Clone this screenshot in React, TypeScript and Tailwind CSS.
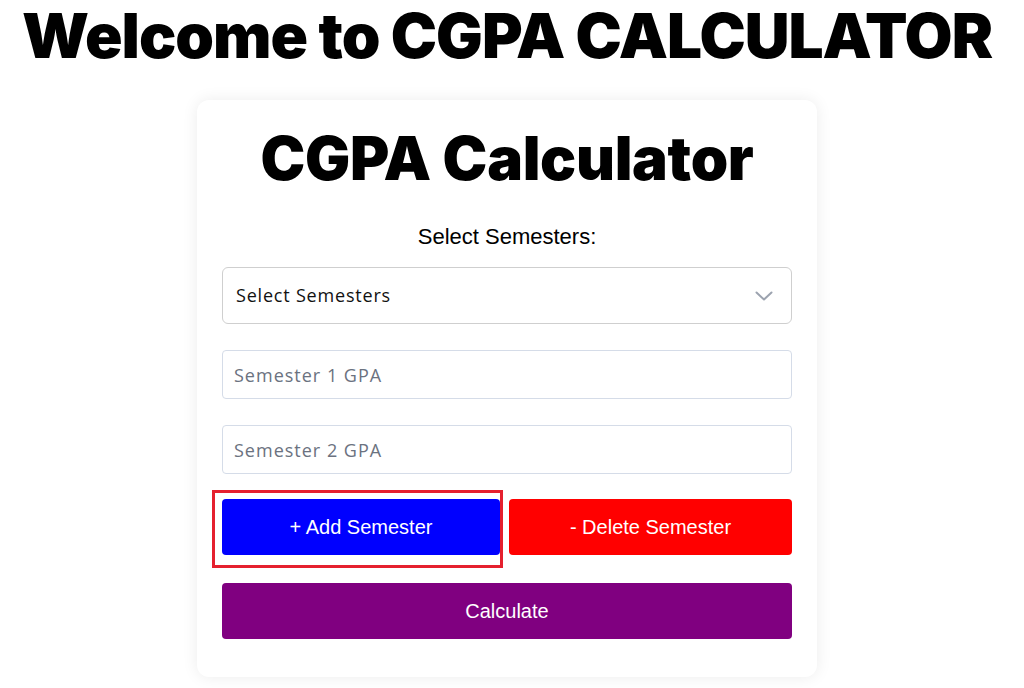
import React from "react";

// CGPA calculator landing card.
export default function App() {
  return (
    <div className="min-h-[688px] w-full bg-white">
      <div className="flex w-[1014px] flex-col items-center">
        <h1 className="mt-0 whitespace-nowrap font-['Inter',sans-serif] text-[62px] font-black leading-[72px] tracking-[-1px] text-black">
          Welcome to CGPA CALCULATOR
        </h1>
        <div className="mt-[28px] w-[620px] rounded-[12px] bg-white px-[25px] pb-[38px] pt-[20px] shadow-[0_0_16px_rgba(0,0,0,0.08)]">
          <h2 className="text-center font-['Inter',sans-serif] text-[60px] font-black leading-[76px] tracking-[-0.3px] text-black">
            CGPA Calculator
          </h2>
          <div className="mt-[28px] text-center font-['Liberation_Sans',Arial,sans-serif] text-[22px] leading-[26px] text-black">
            Select Semesters:
          </div>
          <div className="mt-[17px] flex h-[57px] items-center justify-between rounded-[6px] border border-[#cfcfcf] pl-[13px] pr-[18px] font-['Open_Sans',sans-serif] text-[18px] tracking-[0.8px] text-[#111]">
            <span>Select Semesters</span>
            <svg width="18" height="10" viewBox="0 0 18 10" fill="none">
              <path d="M1.5 1.5 L9 8.5 L16.5 1.5" stroke="#9ca3af" strokeWidth="2" strokeLinecap="round" strokeLinejoin="round" />
            </svg>
          </div>
          <input
            placeholder="Semester 1 GPA"
            className="mt-[26px] block h-[49px] w-full rounded-[4px] border border-[#d5dce8] px-[11px] font-['Open_Sans',sans-serif] text-[18px] tracking-[1px] text-[#111] placeholder:text-[#6b7280] outline-none"
          />
          <input
            placeholder="Semester 2 GPA"
            className="mt-[26px] block h-[49px] w-full rounded-[4px] border border-[#d5dce8] px-[11px] font-['Open_Sans',sans-serif] text-[18px] tracking-[1px] text-[#111] placeholder:text-[#6b7280] outline-none"
          />
          <div className="relative mt-[25px] flex gap-[9px]">
            <button className="h-[56px] w-[278px] rounded-[4px] bg-[#0000ff] font-['Liberation_Sans',Arial,sans-serif] text-[20px] text-white">
              + Add Semester
            </button>
            <button className="h-[56px] flex-1 rounded-[4px] bg-[#ff0000] font-['Liberation_Sans',Arial,sans-serif] text-[20px] text-white">
              - Delete Semester
            </button>
            <div className="pointer-events-none absolute left-[-10px] top-[-9px] h-[78px] w-[291px] border-[3px] border-[#e5202e]" />
          </div>
          <button className="mt-[28px] block h-[56px] w-full rounded-[4px] bg-[#800080] font-['Liberation_Sans',Arial,sans-serif] text-[20px] text-white">
            Calculate
          </button>
        </div>
      </div>
    </div>
  );
}
